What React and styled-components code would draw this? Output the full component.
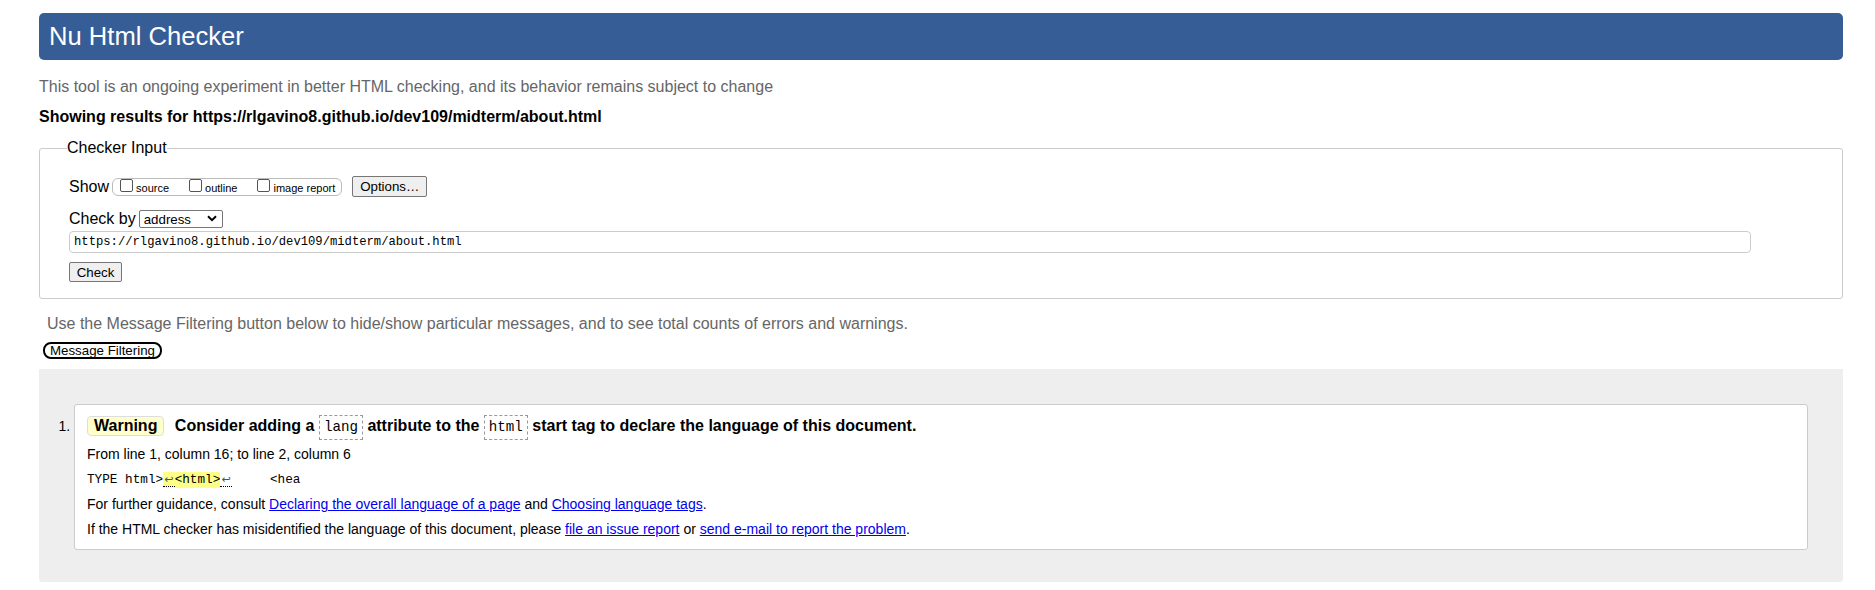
import React from 'react';
import styled, { createGlobalStyle } from 'styled-components';

const GlobalStyle = createGlobalStyle`
  html, body {
    margin: 0;
    padding: 0;
    background: #fff;
  }
  body {
    padding: 13px 32px 8px 39px;
    font-family: "Liberation Sans", Arial, sans-serif;
    font-size: 16px;
    color: #000;
  }
`;

const showOptions = [
  { id: 0, name: 'source' },
  { id: 1, name: 'outline' },
  { id: 2, name: 'image report' },
];

const Chevron = () => (
  <svg width="10" height="7" viewBox="0 0 10 7">
    <path d="M1 1.2 L5 5.2 L9 1.2" fill="none" stroke="#000" strokeWidth="2" />
  </svg>
);

const App = () => {
  return (
    <>
      <GlobalStyle />
      <Title>Nu Html Checker</Title>
      <Tagline>
        This tool is an ongoing experiment in better HTML checking, and its behavior remains subject to change
      </Tagline>
      <Results>Showing results for https://rlgavino8.github.io/dev109/midterm/about.html</Results>

      <Fieldset>
        <Legend>Checker Input</Legend>
        <Row>
          <Label>Show</Label>
          <ShowGroup>
            {showOptions.map((item) => (
              <CheckLabel key={item.id}>
                <Checkbox type="checkbox" />
                <span>{item.name}</span>
              </CheckLabel>
            ))}
          </ShowGroup>
          <Button $wide>Options…</Button>
        </Row>
        <Row $mt={13}>
          <Label>Check by</Label>
          <SelectWrap>
            <Select defaultValue="address">
              <option value="address">address</option>
              <option value="file">file upload</option>
              <option value="text">text input</option>
            </Select>
            <ChevronSpot>
              <Chevron />
            </ChevronSpot>
          </SelectWrap>
        </Row>
        <UrlInput defaultValue="https://rlgavino8.github.io/dev109/midterm/about.html" />
        <Row $mt={9}>
          <Button>Check</Button>
        </Row>
      </Fieldset>

      <Hint>
        Use the Message Filtering button below to hide/show particular messages, and to see total counts of errors and warnings.
      </Hint>
      <FilterButton>Message Filtering</FilterButton>

      <Messages>
        <List>
          <Item>
            <Heading>
              <Badge>Warning</Badge> Consider adding a <Code>lang</Code> attribute to the <Code>html</Code> start tag
              to declare the language of this document.
            </Heading>
            <Line $mt={6}>From line 1, column 16; to line 2, column 6</Line>
            <Extract>
              TYPE html&gt;
              <Mark>
                <Lf>↩</Lf>&lt;html&gt;
              </Mark>
              <Lf>↩</Lf>
              {'     '}&lt;hea
            </Extract>
            <Line>
              For further guidance, consult <Link href="#">Declaring the overall language of a page</Link> and{' '}
              <Link href="#">Choosing language tags</Link>.
            </Line>
            <Line>
              If the HTML checker has misidentified the language of this document, please{' '}
              <Link href="#">file an issue report</Link> or <Link href="#">send e-mail to report the problem</Link>.
            </Line>
          </Item>
        </List>
      </Messages>
    </>
  );
};

export default App;

const Title = styled.h1`
  margin: 0;
  height: 47px;
  padding: 0 10px;
  background: #365d95;
  border-radius: 5px;
  color: #fff;
  font-size: 25.6px;
  font-weight: normal;
  line-height: 47px;
`;

const Tagline = styled.p`
  margin: 18px 0 0;
  line-height: 18px;
  color: #666;
`;

const Results = styled.p`
  margin: 12px 0 0;
  line-height: 18px;
  font-weight: bold;
`;

const Fieldset = styled.fieldset`
  margin: 13px 0 0;
  padding: 1px 29px 16px;
  border: 1px solid #ccc;
  border-radius: 3px;
  min-width: 0;
`;

const Legend = styled.legend`
  margin-left: -2px;
  padding: 0;
  line-height: 18px;
  color: #000;
`;

const Row = styled.div`
  display: flex;
  align-items: center;
  margin-top: ${(p) => (p.$mt ? p.$mt : 18)}px;
`;

const Label = styled.span`
  line-height: 18px;
  margin-right: 3px;
`;

const ShowGroup = styled.span`
  display: inline-flex;
  align-items: flex-start;
  height: 16px;
  padding: 0 6px 0 7px;
  border: 1px solid #bbb;
  border-radius: 6px;
  gap: 20px;
`;

const CheckLabel = styled.label`
  display: inline-flex;
  align-items: flex-start;
  gap: 3px;
  font-size: 11px;
  line-height: 13px;

  span {
    padding-top: 3px;
  }
`;

const Checkbox = styled.input`
  appearance: none;
  width: 13px;
  height: 13px;
  margin: 0;
  border: 1px solid #555;
  border-radius: 2px;
  background: #fff;
`;

const Button = styled.button`
  height: ${(p) => (p.$wide ? 21 : 20)}px;
  min-width: ${(p) => (p.$wide ? 75 : 53)}px;
  margin-left: ${(p) => (p.$wide ? 10 : 0)}px;
  padding: 0 6px;
  border: 1px solid #767676;
  border-radius: 2px;
  background: #efefef;
  font-family: "Liberation Sans", Arial, sans-serif;
  font-size: 13.3px;
  color: #000;
`;

const SelectWrap = styled.span`
  position: relative;
  display: inline-flex;
`;

const Select = styled.select`
  appearance: none;
  width: 84px;
  height: 18px;
  margin: 0;
  padding: 0 0 0 4px;
  border: 1px solid #767676;
  border-radius: 2px;
  background: #fff;
  font-family: "Liberation Sans", Arial, sans-serif;
  font-size: 13.3px;
  color: #000;
`;

const ChevronSpot = styled.span`
  position: absolute;
  right: 6px;
  top: 5px;
  display: flex;
  pointer-events: none;
`;

const UrlInput = styled.input`
  display: block;
  box-sizing: border-box;
  width: 1682px;
  height: 22px;
  margin: 3px 0 0;
  padding: 0 4px;
  border: 1px solid #ccc;
  border-radius: 4px;
  font-family: "Liberation Mono", "DejaVu Sans Mono", monospace;
  font-size: 12.2px;
  color: #000;
`;

const Hint = styled.p`
  margin: 16px 0 0 8px;
  line-height: 18px;
  color: #666;
`;

const FilterButton = styled.button`
  display: block;
  height: 17px;
  margin: 9px 0 0 4px;
  padding: 0 5px;
  border: 2px solid #000;
  border-radius: 8px;
  background: #fff;
  font-family: "Liberation Sans", Arial, sans-serif;
  font-size: 13.3px;
  line-height: 13px;
  color: #000;
`;

const Messages = styled.div`
  margin-top: 10px;
  padding: 35px 35px 32px;
  background: #eee;
  border-radius: 0 0 3px 3px;
`;

const List = styled.ol`
  margin: 0;
  padding: 0;
  font-size: 14px;
`;

const Item = styled.li`
  padding: 8px 12px 11px;
  border: 1px solid #ccc;
  border-radius: 3px;
  background: #fff;
  line-height: 17px;
`;

const Heading = styled.p`
  margin: 0;
  font-size: 16px;
  font-weight: bold;
  line-height: 25px;
`;

const Badge = styled.span`
  display: inline-block;
  margin-right: 6px;
  padding: 0 6px;
  border: 1px solid #ddd;
  border-radius: 4px;
  background: #ffc;
  line-height: 18px;
`;

const Code = styled.code`
  display: inline-block;
  padding: 3px 4px;
  border: 1px dashed #999;
  font-family: "Liberation Mono", "DejaVu Sans Mono", monospace;
  font-size: 14.2px;
  font-weight: normal;
  line-height: 17px;
`;

const Line = styled.p`
  margin: ${(p) => (p.$mt !== undefined ? p.$mt : 8)}px 0 0;
`;

const Extract = styled.p`
  margin: 8px 0 0;
  font-family: "Liberation Mono", "DejaVu Sans Mono", monospace;
  font-size: 12.7px;
  white-space: pre;
`;

const Mark = styled.mark`
  display: inline-block;
  padding: 1px 0;
  line-height: 14px;
  background: #ff8;
  color: #000;
`;

const Lf = styled.span`
  display: inline-block;
  width: 11.5px;
  line-height: 13px;
  text-align: center;
  border-bottom: 1px dotted #000;
  font-family: "DejaVu Sans", sans-serif;
  font-size: 11px;
  color: #555;
`;

const Link = styled.a`
  color: #00e;
`;
